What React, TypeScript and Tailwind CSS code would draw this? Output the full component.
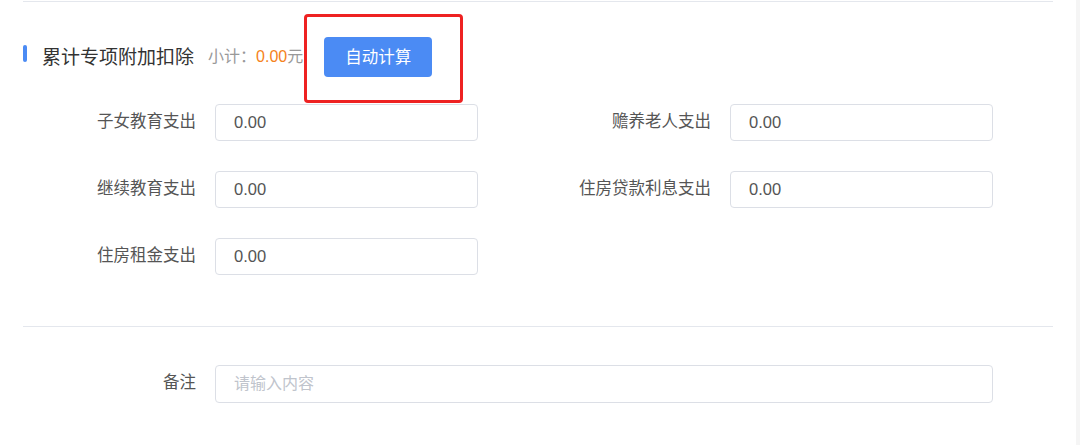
import React from "react";

const leftItems = [
  { label: "子女教育支出", value: "0.00" },
  { label: "继续教育支出", value: "0.00" },
  { label: "住房租金支出", value: "0.00" },
];

const rightItems = [
  { label: "赡养老人支出", value: "0.00" },
  { label: "住房贷款利息支出", value: "0.00" },
];

function FormItem({ label, value }: { label: string; value: string }) {
  return (
    <div className="flex items-center w-[515px] h-[37px]">
      <label className="w-[192px] pr-[19px] text-right text-[16.5px] text-[#555] leading-none -mt-[2px]">
        {label}
      </label>
      <input
        readOnly
        value={value}
        className="w-[263px] h-[37px] border border-[#dcdfe6] rounded-[4px] px-[18px] text-[16.5px] text-[#555] outline-none"
      />
    </div>
  );
}

export default function App() {
  return (
    <div
      className="relative w-[1080px] h-[445px] bg-white overflow-hidden flex"
      style={{ fontFamily: '"Liberation Sans", "Noto Sans CJK SC", sans-serif' }}
    >
      <div className="flex-1 pl-[23px] pr-[23px]">
        <div className="border-t border-[#e4e7ed] mt-[1px]" />

        {/* section title */}
        <div className="flex items-center h-[40px] mt-[35px]">
          <span className="w-[4px] h-[17px] bg-[#4b8bf4] rounded-[2px] -mt-[8px]" />
          <span className="ml-[15px] text-[19px] text-[#333] leading-none">
            累计专项附加扣除
          </span>
          <span className="ml-[14px] text-[16px] text-[#999] leading-none">
            小计：<span className="text-[#f58220]">0.00</span>元
          </span>
          <button className="ml-[21px] w-[108px] h-[40px] rounded-[4px] bg-[#4b8bf4] text-white text-[16.5px]">
            自动计算
          </button>
        </div>

        {/* fields */}
        <div className="flex mt-[27px]">
          <div className="flex flex-col gap-[30px]">
            {leftItems.map((item) => (
              <FormItem key={item.label} {...item} />
            ))}
          </div>
          <div className="flex flex-col gap-[30px]">
            {rightItems.map((item) => (
              <FormItem key={item.label} {...item} />
            ))}
          </div>
        </div>

        <div className="border-t border-[#e4e7ed] mt-[51px]" />

        <div className="flex items-center h-[38px] mt-[38px]">
          <label className="w-[192px] pr-[19px] text-right text-[16.5px] text-[#555] leading-none -mt-[4px]">
            备注
          </label>
          <input
            placeholder="请输入内容"
            className="w-[778px] h-[38px] border border-[#dcdfe6] rounded-[4px] px-[18px] text-[16px] text-[#555] placeholder:text-[#c0c4cc] outline-none"
          />
        </div>
      </div>
      <div className="w-[4px] bg-[#f5f5f5]" />

      {/* annotation overlay */}
      <div className="absolute left-[304px] top-[14px] w-[159px] h-[89px] border-[3px] border-[#ee2222] rounded-[4px]" />
    </div>
  );
}
